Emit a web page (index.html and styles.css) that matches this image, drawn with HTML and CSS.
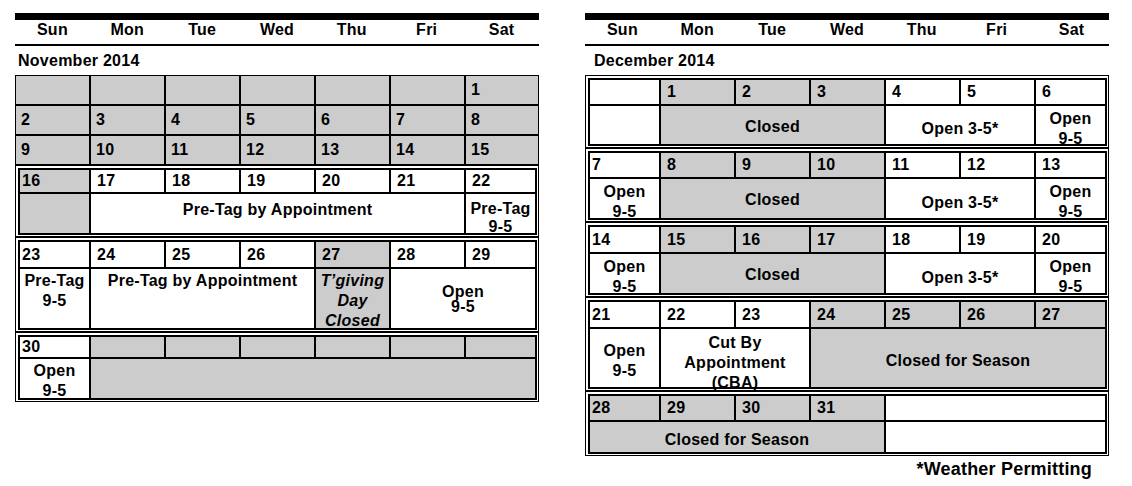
FILE: index.html
```html
<!DOCTYPE html>
<html>
<head>
<meta charset="utf-8">
<link rel="stylesheet" href="styles.css">
</head>
<body>
<div class="page">
  <div class="panel">
    <div class="bar"></div>
    <div class="dow"><span>Sun</span><span>Mon</span><span>Tue</span><span>Wed</span><span>Thu</span><span>Fri</span><span>Sat</span></div>
    <div class="rule"></div>
    <div class="title">November 2014</div>
    <div class="frame">
      <div class="top">
        <div class="n g"></div><div class="n g"></div><div class="n g"></div><div class="n g"></div><div class="n g"></div><div class="n g"></div><div class="n g">1</div>
        <div class="n g">2</div><div class="n g">3</div><div class="n g">4</div><div class="n g">5</div><div class="n g">6</div><div class="n g">7</div><div class="n g">8</div>
        <div class="n g">9</div><div class="n g">10</div><div class="n g">11</div><div class="n g">12</div><div class="n g">13</div><div class="n g">14</div><div class="n g">15</div>
      </div>
      <div class="wk">
        <div class="wg w16">
          <div class="n c1 g">16</div><div class="n">17</div><div class="n">18</div><div class="n">19</div><div class="n">20</div><div class="n">21</div><div class="n">22</div>
          <div class="g"></div>
          <div class="x s5 at p6">Pre-Tag by Appointment</div>
          <div class="x at p6 lh18">Pre-Tag<br>9-5</div>
        </div>
      </div>
      <div class="wk">
        <div class="wg w23">
          <div class="n c1">23</div><div class="n">24</div><div class="n">25</div><div class="n">26</div><div class="n g">27</div><div class="n">28</div><div class="n">29</div>
          <div class="x at p2 lh20">Pre-Tag<br>9-5</div>
          <div class="x s3 at p2 lh20">Pre-Tag by Appointment</div>
          <div class="x g at p2 lh20 it">T’giving<br>Day<br>Closed</div>
          <div class="x s2 lh15">Open<br>9-5</div>
        </div>
      </div>
      <div class="wk">
        <div class="wg w30">
          <div class="n c1">30</div><div class="n g"></div><div class="n g"></div><div class="n g"></div><div class="n g"></div><div class="n g"></div><div class="n g"></div>
          <div class="x at p2 lh20">Open<br>9-5</div>
          <div class="g s6"></div>
        </div>
      </div>
    </div>
  </div>

  <div class="panel">
    <div class="bar"></div>
    <div class="dow"><span>Sun</span><span>Mon</span><span>Tue</span><span>Wed</span><span>Thu</span><span>Fri</span><span>Sat</span></div>
    <div class="rule"></div>
    <div class="title dec">December 2014</div>
    <div class="frame pad">
      <div class="wk">
        <div class="wg d1">
          <div class="n c1"></div><div class="n g">1</div><div class="n g">2</div><div class="n g">3</div><div class="n">4</div><div class="n">5</div><div class="n">6</div>
          <div></div>
          <div class="x g s3 p3">Closed</div>
          <div class="x s2 p8">Open 3-5*</div>
          <div class="x at p3">Open<br>9-5</div>
        </div>
      </div>
      <div class="wk">
        <div class="wg d2">
          <div class="n c1">7</div><div class="n g">8</div><div class="n g">9</div><div class="n g">10</div><div class="n">11</div><div class="n">12</div><div class="n">13</div>
          <div class="x at p3">Open<br>9-5</div>
          <div class="x g s3 p3">Closed</div>
          <div class="x s2 p8">Open 3-5*</div>
          <div class="x at p3">Open<br>9-5</div>
        </div>
      </div>
      <div class="wk">
        <div class="wg d3">
          <div class="n c1">14</div><div class="n g">15</div><div class="n g">16</div><div class="n g">17</div><div class="n">18</div><div class="n">19</div><div class="n">20</div>
          <div class="x at p3">Open<br>9-5</div>
          <div class="x g s3 p3">Closed</div>
          <div class="x s2 p8">Open 3-5*</div>
          <div class="x at p3">Open<br>9-5</div>
        </div>
      </div>
      <div class="wk">
        <div class="wg d4">
          <div class="n c1">21</div><div class="n">22</div><div class="n">23</div><div class="n g">24</div><div class="n g">25</div><div class="n g">26</div><div class="n g">27</div>
          <div class="x p5">Open<br>9-5</div>
          <div class="x s2 at p4 lh20">Cut By<br>Appointment<br>(CBA)</div>
          <div class="x g s4 p5">Closed for Season</div>
        </div>
      </div>
      <div class="wk">
        <div class="wg d5">
          <div class="n c1 g">28</div><div class="n g">29</div><div class="n g">30</div><div class="n g">31</div><div class="s3"></div>
          <div class="x g s4 p5">Closed for Season</div>
          <div class="s3"></div>
        </div>
      </div>
    </div>
    <div class="note">*Weather Permitting</div>
  </div>
</div>
</body>
</html>
```

FILE: styles.css
```css
html, body {
  margin: 0;
  padding: 0;
  background: #fff;
}
body {
  padding: 13px 0 0 15px;
  font-family: "Liberation Sans", Arial, sans-serif;
  font-weight: bold;
  font-size: 16px;
  letter-spacing: 0.25px;
  color: #000;
}
.page {
  display: flex;
  gap: 46px;
  align-items: flex-start;
}
.panel {
  width: 524px;
}
.bar {
  height: 7px;
  background: #000;
}
.dow {
  display: grid;
  grid-template-columns: repeat(7, 1fr);
  height: 24px;
  line-height: 19px;
  text-align: center;
}
.rule {
  height: 2px;
  background: #000;
}
.title {
  height: 29px;
  box-sizing: border-box;
  padding: 5px 0 0 3px;
  line-height: 19px;
}
.title.dec {
  padding-left: 9px;
}
.frame {
  border: 1px solid #000;
  background: #000;
  display: flex;
  flex-direction: column;
  gap: 2px;
}
.top {
  display: grid;
  grid-template-columns: repeat(6, 73px) 72px;
  grid-auto-rows: 28px;
  gap: 2px;
  background: #000;
}
.top .n {
  padding-left: 5px;
}
.wk {
  background: #fff;
  padding: 2px 1px 1px 2px;
}
.wg {
  display: grid;
  grid-template-columns: 69px repeat(5, 73px) 69px;
  gap: 2px;
  padding: 2px;
  background: #000;
}
.wg > div {
  background: #fff;
}
.wg > div.g, .top > div.g {
  background: #cccccc;
}
.n {
  display: flex;
  align-items: center;
  padding-left: 6px;
  line-height: 19.5px;
}
.wg .n.c1 {
  padding-left: 2px;
}
.x {
  display: flex;
  flex-direction: column;
  align-items: center;
  justify-content: center;
  text-align: center;
  line-height: 19.5px;
  box-sizing: border-box;
}
.x.at { justify-content: flex-start; }
.p2 { padding-top: 2px; }
.p3 { padding-top: 3px; }
.p4 { padding-top: 4px; }
.p5 { padding-top: 5px; }
.p6 { padding-top: 6px; }
.p8 { padding-top: 8px; }
.lh15 { line-height: 15px; }
.lh18 { line-height: 18px; }
.lh20 { line-height: 20px; }
.it { font-style: italic; }
.s2 { grid-column: span 2; }
.s3 { grid-column: span 3; }
.s4 { grid-column: span 4; }
.s5 { grid-column: span 5; }
.s6 { grid-column: span 6; }
.w16 { grid-template-rows: 22px 39px; }
.w23 { grid-template-rows: 25px 59px; }
.w30 { grid-template-rows: 20px 39px; }
.d1 { grid-template-rows: 24px 38px; }
.d2 { grid-template-rows: 24px 39px; }
.d3 { grid-template-rows: 25px 39px; }
.d4 { grid-template-rows: 25px 58px; }
.d5 { grid-template-rows: 24px 30px; }
.note {
  margin-top: 3px;
  padding-right: 17px;
  text-align: right;
  font-size: 18px;
  line-height: 20px;
  letter-spacing: 0.2px;
}
```
